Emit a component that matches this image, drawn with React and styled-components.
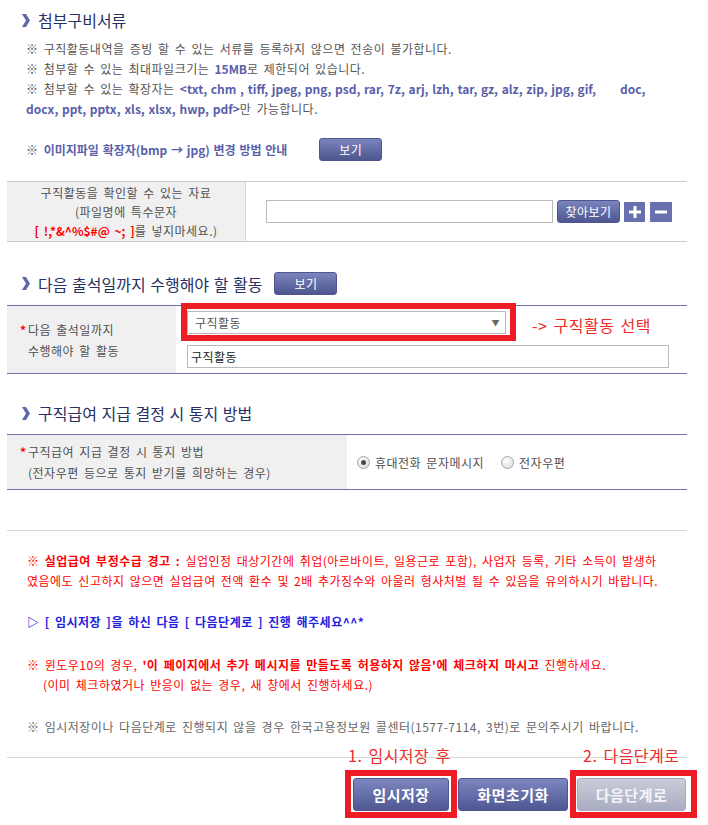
import React from "react";
import styled, { createGlobalStyle } from "styled-components";

const GlobalStyle = createGlobalStyle`
  body {
    margin: 0;
    background: #fff;
    font-family: "Noto Sans CJK KR", "Noto Sans", sans-serif;
    font-size: 12px;
    letter-spacing: 0.5px;
    word-spacing: 2px;
    color: #555;
  }
  * { box-sizing: border-box; }
`;

const Page = styled.div`
  width: 680px;
  margin-left: 7px;
  padding-top: 10px;
  padding-bottom: 12px;
`;

const SectionHead = styled.div`
  display: flex;
  align-items: center;
  gap: 8px;
  height: ${(p) => (p.$tall ? 23 : 20)}px;
  margin-top: ${(p) => p.$top || 0}px;
  padding-left: 15px;
  font-size: 16px;
  letter-spacing: 0;
  word-spacing: 1px;
  color: #283163;
`;

const Chevron = styled.svg`
  width: 8px;
  height: 13px;
  flex: none;
  fill: #5d68a8;
`;

const NoteList = styled.div`
  margin-top: 9px;
  padding-left: 19px;
  line-height: 20px;
  white-space: nowrap;
`;

const Hi = styled.b`
  color: #5a5faa;
  font-weight: bold;
  letter-spacing: 0;
  word-spacing: 1px;
`;

const Gap = styled.span`
  display: inline-block;
  width: 24px;
`;

const GuideRow = styled.div`
  display: flex;
  align-items: center;
  gap: 32px;
  height: 23px;
  margin-top: 19px;
  padding-left: 19px;
`;

const SmallButton = styled.button`
  width: 63px;
  height: 23px;
  padding: 0;
  margin-left: ${(p) => p.$ml || 0}px;
  border: 1px solid #4f5690;
  border-radius: 3px;
  background: linear-gradient(#7c84bd, #4e5690);
  color: #fff;
  font-family: inherit;
  font-size: 12px;
  letter-spacing: 0.5px;
`;

const Row = styled.div`
  display: grid;
  grid-template-columns: ${(p) => p.$label}px 1fr;
  min-height: ${(p) => p.$h || 0}px;
  margin-top: ${(p) => p.$top}px;
  border-top: 1px solid ${(p) => p.$line};
  border-bottom: 1px solid ${(p) => p.$line};
`;

const LabelCell = styled.div`
  display: flex;
  flex-direction: column;
  justify-content: center;
  background: #f0f0f0;
  line-height: ${(p) => (p.$center ? 19 : 21)}px;
  padding: ${(p) => (p.$center ? "1px 0" : "0 0 0 21px")};
  text-align: ${(p) => (p.$center ? "center" : "left")};
  border-right: ${(p) => (p.$center ? "1px solid #dadada" : "none")};
  color: #505050;
`;

const Star = styled.span`
  display: inline-block;
  width: 8px;
  margin-left: -8px;
  color: #f00;
  font-weight: bold;
`;

const Danger = styled.b`
  color: #f00;
  letter-spacing: 0;
`;

const FieldCell = styled.div`
  display: flex;
  flex-direction: ${(p) => (p.$stack ? "column" : "row")};
  align-items: ${(p) => (p.$stack ? "flex-start" : "center")};
  gap: ${(p) => p.$gap || 0}px;
  padding: ${(p) => p.$pad};
`;

const TextBox = styled.input`
  width: ${(p) => p.$w}px;
  height: 23px;
  margin-right: ${(p) => p.$mr || 0}px;
  padding: 0 3px;
  border: 1px solid #b9b9b9;
  font-family: inherit;
  font-size: 12px;
  letter-spacing: 0.5px;
  color: #222;
  outline: none;
`;

const IconButton = styled.button`
  display: flex;
  align-items: center;
  justify-content: center;
  width: ${(p) => p.$w}px;
  height: 20px;
  margin-left: ${(p) => p.$ml}px;
  padding: 0;
  border: none;
  background: #6870ae;
`;

const Annotated = styled.div`
  position: relative;
  display: inline-flex;
`;

const RedBox = styled.div`
  position: absolute;
  top: -${(p) => p.$t}px;
  right: -${(p) => p.$r}px;
  bottom: -${(p) => p.$b}px;
  left: -${(p) => p.$l}px;
  border: 6px solid #ee1d25;
  pointer-events: none;
`;

const Callout = styled.span`
  position: absolute;
  top: ${(p) => p.$top}px;
  left: ${(p) => p.$left};
  line-height: 20px;
  font-size: 16px;
  color: #ee2a2a;
  white-space: nowrap;
  word-spacing: 2px;
`;

const FakeSelect = styled.div`
  display: flex;
  align-items: center;
  justify-content: space-between;
  width: 319px;
  height: 23px;
  padding: 0 5px 0 7px;
  border: 1px solid #b9b9b9;
  background: #fff;
  color: #555;
`;

const Arrow = styled.span`
  font-size: 8px;
  color: #666;
`;

const RadioGroup = styled.label`
  display: flex;
  align-items: center;
  gap: 5px;
  margin-right: 17px;
  color: #505050;
`;

const RadioDot = styled.span`
  display: flex;
  align-items: center;
  justify-content: center;
  width: 13px;
  height: 13px;
  border-radius: 50%;
  border: 1px solid #a5a5a5;
  background: radial-gradient(circle at 40% 35%, #fff, #d6d6d6);
  &::after {
    content: "";
    width: 5px;
    height: 5px;
    border-radius: 50%;
    background: ${(p) => (p.$on ? "#4a4a4a" : "transparent")};
  }
`;

const Divider = styled.div`
  height: 1px;
  margin-top: 40px;
  background: #d6d6d6;
`;

const Para = styled.p`
  margin: ${(p) => p.$top}px 0 0;
  padding-left: 20px;
  line-height: 20px;
  color: ${(p) => p.$color || "#666"};
  font-weight: ${(p) => (p.$bold ? "bold" : "normal")};
  white-space: nowrap;
`;

const Indent = styled.span`
  display: block;
  padding-left: 16px;
`;

const ButtonBar = styled.div`
  display: flex;
  justify-content: flex-end;
  gap: 9px;
  margin-top: 20px;
  padding: 20px 1px 0 0;
  border-top: 1px solid #d6d6d6;
`;

const BigButton = styled.button`
  width: ${(p) => p.$w}px;
  height: 33px;
  padding: 0;
  border: 1px solid ${(p) => (p.$muted ? "#a7abbd" : "#4f5690")};
  border-radius: 3px;
  background: ${(p) =>
    p.$muted
      ? "linear-gradient(#c9ccd8, #a9adc1)"
      : "linear-gradient(#7e86c0, #4f5792)"};
  color: ${(p) => (p.$muted ? "#f4f4f8" : "#fff")};
  font-family: inherit;
  font-size: 15px;
  font-weight: bold;
  letter-spacing: 0.5px;
`;

const ChevronIcon = () => (
  <Chevron viewBox="0 0 8 13">
    <polygon points="0,0 4,0 8,6.5 4,13 0,13 4,6.5" />
  </Chevron>
);

const PlusIcon = () => (
  <svg width="12" height="12" viewBox="0 0 12 12">
    <path d="M6 0v12M0 6h12" stroke="#fff" strokeWidth="3" />
  </svg>
);

const MinusIcon = () => (
  <svg width="12" height="12" viewBox="0 0 12 12">
    <path d="M0 6h12" stroke="#fff" strokeWidth="3" />
  </svg>
);

export default function App() {
  return (
    <>
      <GlobalStyle />
      <Page>
        <SectionHead>
          <ChevronIcon />
          첨부구비서류
        </SectionHead>
        <NoteList>
          ※ 구직활동내역을 증빙 할 수 있는 서류를 등록하지 않으면 전송이 불가합니다.
          <br />
          ※ 첨부할 수 있는 최대파일크기는 <Hi>15MB</Hi>로 제한되어 있습니다.
          <br />
          ※ 첨부할 수 있는 확장자는{" "}
          <Hi>
            &lt;txt, chm , tiff, jpeg, png, psd, rar, 7z, arj, lzh, tar, gz, alz, zip, jpg, gif,
            <Gap />
            doc,
            <br />
            docx, ppt, pptx, xls, xlsx, hwp, pdf&gt;
          </Hi>
          만 가능합니다.
        </NoteList>
        <GuideRow>
          <span>
            ※ <Hi>이미지파일 확장자(bmp → jpg) 변경 방법 안내</Hi>
          </span>
          <SmallButton>보기</SmallButton>
        </GuideRow>

        <Row $label={239} $line="#c9c9c9" $top={20}>
          <LabelCell $center>
            <span>구직활동을 확인할 수 있는 자료</span>
            <span>(파일명에 특수문자</span>
            <span>
              <Danger>[ !,*&amp;^%$#@ ~; ]</Danger>를 넣지마세요.)
            </span>
          </LabelCell>
          <FieldCell $pad="0 0 0 20px">
            <TextBox $w={287} $mr={4} readOnly />
            <SmallButton>찾아보기</SmallButton>
            <IconButton $w={21} $ml={4}>
              <PlusIcon />
            </IconButton>
            <IconButton $w={22} $ml={5}>
              <MinusIcon />
            </IconButton>
          </FieldCell>
        </Row>

        <SectionHead $tall $top={30}>
          <ChevronIcon />
          다음 출석일까지 수행해야 할 활동
          <SmallButton $ml={4}>보기</SmallButton>
        </SectionHead>

        <Row $label={169} $line="#6b70aa" $top={10}>
          <LabelCell>
            <span>
              <Star>*</Star>다음 출석일까지
            </span>
            <span>수행해야 할 활동</span>
          </LabelCell>
          <FieldCell $stack $gap={11} $pad="5px 0 5px 11px">
            <Annotated>
              <FakeSelect>
                <span>구직활동</span>
                <Arrow>▼</Arrow>
              </FakeSelect>
              <RedBox $t={8} $r={10} $b={7} $l={6} />
              <Callout $top={4} $left="calc(100% + 26px)">
                -&gt; 구직활동 선택
              </Callout>
            </Annotated>
            <TextBox $w={482} value="구직활동" readOnly />
          </FieldCell>
        </Row>

        <SectionHead $top={29}>
          <ChevronIcon />
          구직급여 지급 결정 시 통지 방법
        </SectionHead>

        <Row $label={340} $line="#6b70aa" $top={11} $h={56}>
          <LabelCell>
            <span>
              <Star>*</Star>구직급여 지급 결정 시 통지 방법
            </span>
            <span>(전자우편 등으로 통지 받기를 희망하는 경우)</span>
          </LabelCell>
          <FieldCell $pad="0 0 0 10px">
            <RadioGroup>
              <RadioDot $on />
              휴대전화 문자메시지
            </RadioGroup>
            <RadioGroup>
              <RadioDot />
              전자우편
            </RadioGroup>
          </FieldCell>
        </Row>

        <Divider />

        <Para $top={20} $color="#f00">
          <b>※ 실업급여 부정수급 경고 :</b> 실업인정 대상기간에 취업(아르바이트, 일용근로 포함), 사업자 등록, 기타 소득이 발생하
          <br />
          였음에도 신고하지 않으면 실업급여 전액 환수 및 2배 추가징수와 아울러 형사처벌 될 수 있음을 유의하시기 바랍니다.
        </Para>

        <Para $top={21} $color="#2323dd" $bold>
          ▷ [ 임시저장 ]을 하신 다음 [ 다음단계로 ] 진행 해주세요^^*
        </Para>

        <Para $top={23} $color="#f00">
          ※ 윈도우10의 경우, <b>'이 페이지에서 추가 메시지를 만들도록 허용하지 않음'에 체크하지 마시고</b> 진행하세요.
          <Indent>(이미 체크하였거나 반응이 없는 경우, 새 창에서 진행하세요.)</Indent>
        </Para>

        <Para $top={22}>
          ※ 임시저장이나 다음단계로 진행되지 않을 경우 한국고용정보원 콜센터(1577-7114, 3번)로 문의주시기 바랍니다.
        </Para>

        <ButtonBar>
          <Annotated>
            <BigButton $w={96}>임시저장</BigButton>
            <RedBox $t={8} $r={8} $b={7} $l={8} />
            <Callout $top={-33} $left="-5px">
              1. 임시저장 후
            </Callout>
          </Annotated>
          <BigButton $w={110}>화면초기화</BigButton>
          <Annotated>
            <BigButton $w={109} $muted>
              다음단계로
            </BigButton>
            <RedBox $t={8} $r={11} $b={7} $l={7} />
            <Callout $top={-33} $left="6px">
              2. 다음단계로
            </Callout>
          </Annotated>
        </ButtonBar>
      </Page>
    </>
  );
}
